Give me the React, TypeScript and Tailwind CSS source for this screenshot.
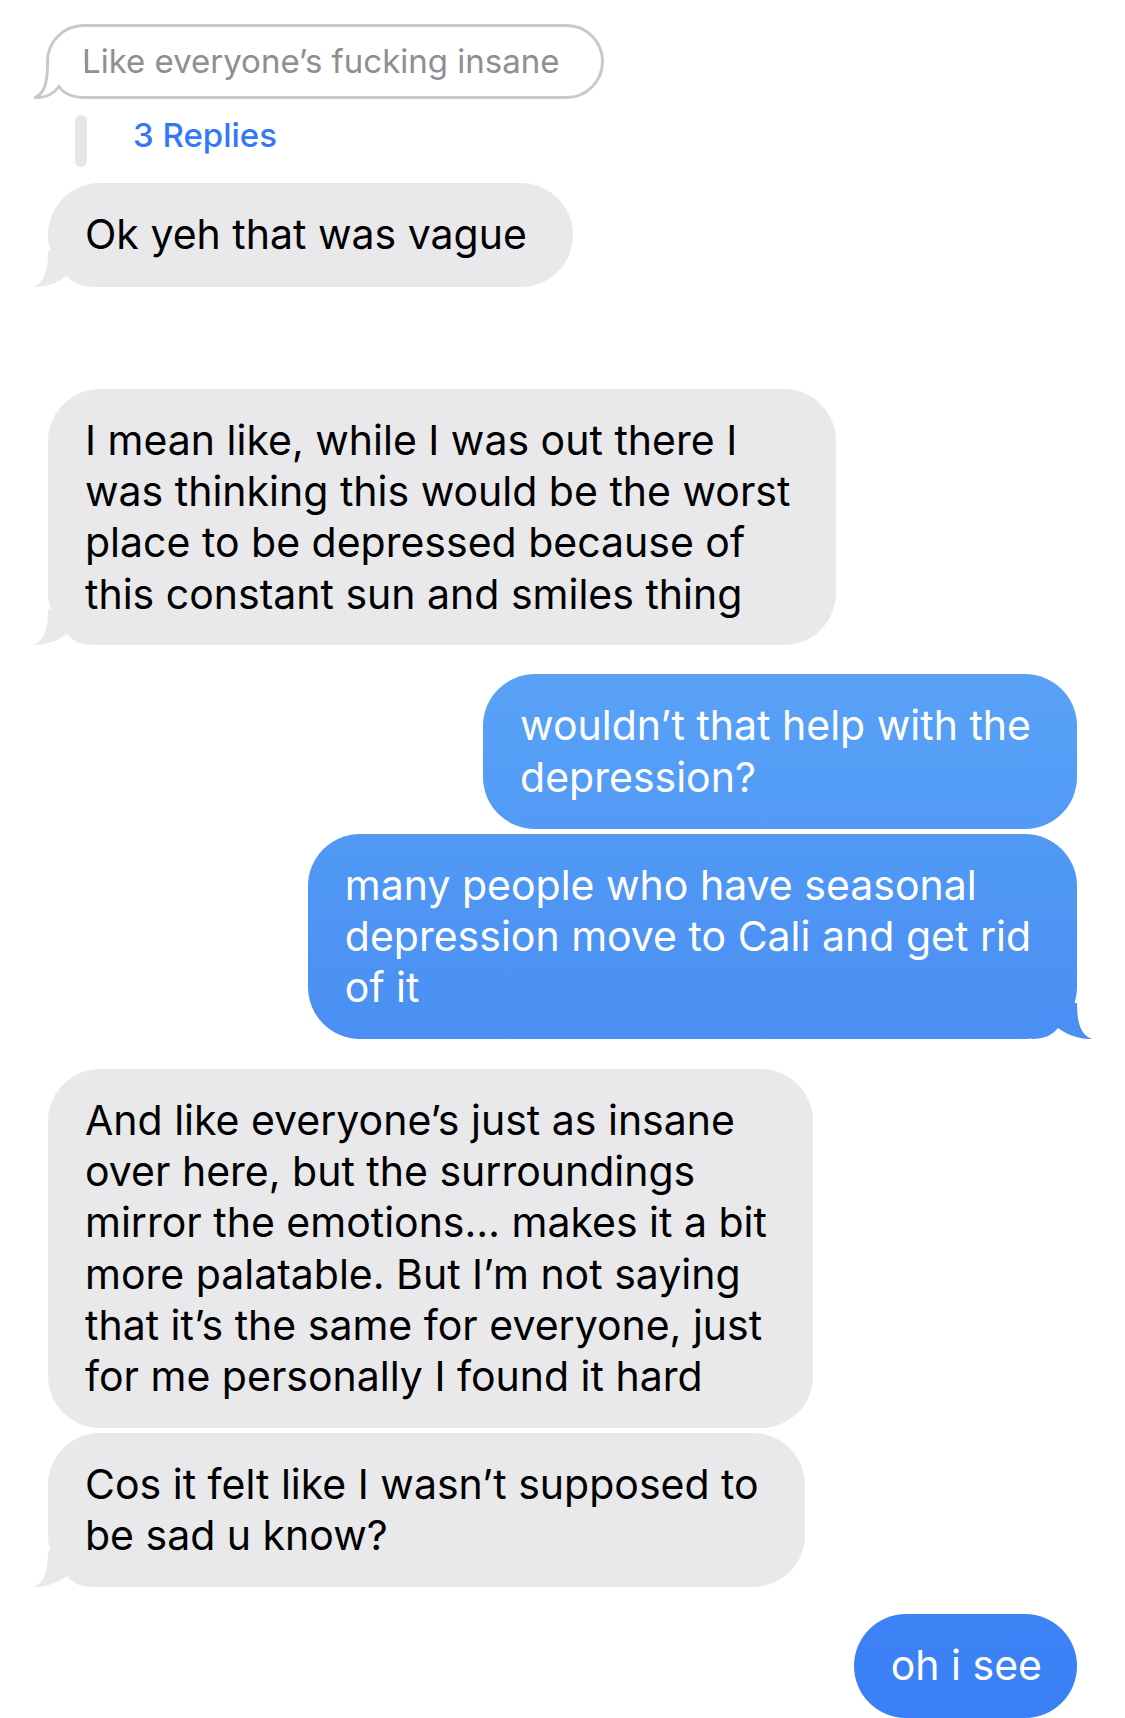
import React from "react";

const font = { fontFamily: "Inter, 'Noto Sans', sans-serif" };

type Side = "left" | "right";

// iOS style bubble tail, drawn at the bottom corner of a bubble
function Tail({ side, color }: { side: Side; color: string }) {
  return (
    <svg
      width="60"
      height="40"
      viewBox="0 0 60 40"
      className={`absolute bottom-0 ${side === "left" ? "-left-[15px]" : "-right-[15px] -scale-x-100"}`}
    >
      <path d="M15,4 C15,27 10,36 0,40 C11,40.5 25,36 34,29 C40,36 47,40 60,40 L60,4 Z" fill={color} />
    </svg>
  );
}

interface BubbleProps {
  lines: string[];
  side: Side;
  tail?: boolean;
  tight?: boolean;
  className?: string;
}

function Bubble({ lines, side, tail = false, tight = false, className = "" }: BubbleProps) {
  const isMe = side === "right";
  return (
    <div
      className={`relative w-fit min-h-[104px] rounded-[52px] py-[26px] pl-[37px] text-[41px] leading-[51.2px] ${
        tight ? "pr-[35px]" : "pr-[46px]"
      } ${isMe ? "self-end mr-[48px] text-white" : "ml-[48px] bg-[#e9e9eb] text-black"} ${className}`}
    >
      {tail && <Tail side={side} color={isMe ? "#4a8ff3" : "#e9e9eb"} />}
      <div className="relative">
        {lines.map((l, i) => (
          <div key={i} className="whitespace-nowrap">
            {l}
          </div>
        ))}
      </div>
    </div>
  );
}

function QuotedMessage() {
  return (
    <div className="relative ml-[46px] mt-[24px] w-fit">
      <div className="flex h-[75px] items-center rounded-full border-[3px] border-[#c9c9cd] pl-[33px] pr-[41px] text-[33px] text-[#8e8e93]">
        Like everyone’s fucking insane
      </div>
      <svg width="52" height="34" viewBox="0 0 52 34" className="absolute bottom-0 -left-[13px]">
        <path d="M13,0 C13,20 8.5,30 0,34 L52,34 L52,0 Z" fill="#ffffff" />
        <path
          d="M14.5,0 C14.5,20 10,30 1.5,32.5 C10,33 20,30 26,21.5 C31,29 40,32.5 52,32.5"
          fill="none"
          stroke="#c9c9cd"
          strokeWidth="3"
        />
      </svg>
    </div>
  );
}

export default function App() {
  return (
    <div className="flex h-[1718px] w-[1125px] flex-col overflow-hidden bg-white" style={font}>
      <QuotedMessage />

      {/* thread replies */}
      <div className="mt-[16px] flex items-start">
        <div className="ml-[75px] h-[52px] w-[12px] rounded-full bg-[#e5e5ea]" />
        <span className="ml-[46px] text-[33px] font-medium leading-[40px] text-[#3478f6]">3 Replies</span>
      </div>

      <Bubble className="mt-[16px]" side="left" tail lines={["Ok yeh that was vague"]} />

      <Bubble
        className="mt-[102px]"
        side="left"
        tail
        lines={[
          "I mean like, while I was out there I",
          "was thinking this would be the worst",
          "place to be depressed because of",
          "this constant sun and smiles thing",
        ]}
      />

      <Bubble
        className="mt-[29px] bg-gradient-to-b from-[#59a2f7] to-[#529af5]"
        side="right"
        lines={["wouldn’t that help with the", "depression?"]}
      />
      <Bubble
        className="mt-[5px] bg-gradient-to-b from-[#5199f5] to-[#4a8ff3]"
        side="right"
        tail
        lines={["many people who have seasonal", "depression move to Cali and get rid", "of it"]}
      />

      <Bubble
        className="mt-[30px]"
        side="left"
        lines={[
          "And like everyone’s just as insane",
          "over here, but the surroundings",
          "mirror the emotions… makes it a bit",
          "more palatable. But I’m not saying",
          "that it’s the same for everyone, just",
          "for me personally I found it hard",
        ]}
      />
      <Bubble
        className="mt-[5px]"
        side="left"
        tail
        lines={["Cos it felt like I wasn’t supposed to", "be sad u know?"]}
      />

      <Bubble
        className="mt-[27px] bg-gradient-to-b from-[#3d83f6] to-[#3a7ff5]"
        side="right"
        tight
        lines={["oh i see"]}
      />
    </div>
  );
}
